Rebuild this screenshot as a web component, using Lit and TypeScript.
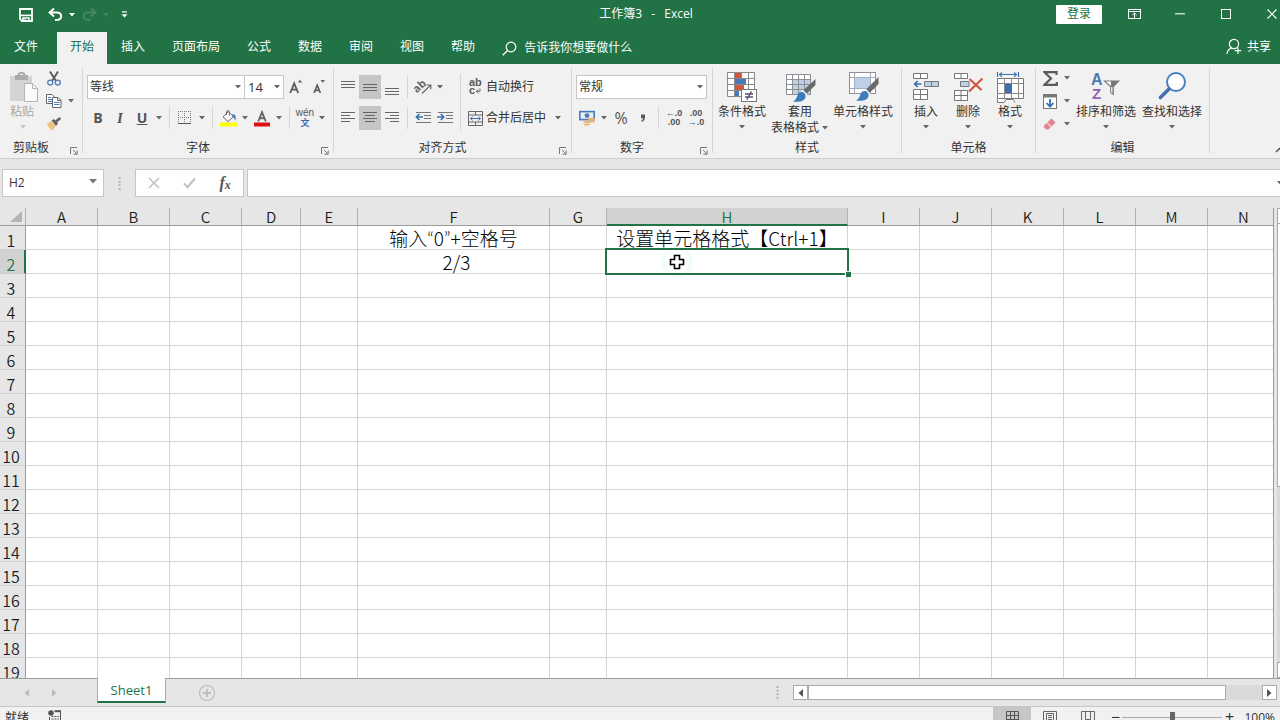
import { LitElement, html, css, svg, nothing, TemplateResult } from "lit";
import { customElement } from "lit/decorators.js";
import { classMap } from "lit/directives/class-map.js";

const icon = (w: number, h: number, body: unknown) =>
  html`<svg width=${w} height=${h} viewBox="0 0 ${w} ${h}" fill="none" aria-hidden="true">${body}</svg>`;

const arrow = (color = "#666") => icon(6, 4, svg`<path d="M0 0H6L3 3.4Z" fill=${color} />`);
const lines = (spec: [number, number, number][], h = 18) =>
  icon(14, h, spec.map(([x, y, w]) => svg`<path d="M${x} ${y + 0.5}h${w}" stroke="#666"/>`));

const icons = {
  save: icon(14, 14, svg`<path d="M1 1H13V13H3L1 11Z" stroke="#fff" stroke-width="1.8"/><path d="M2 7.4H12" stroke="#fff" stroke-width="1.6"/><path d="M4 13V10H10V13" stroke="#fff" stroke-width="1.6"/><path d="M6 10.5V13" stroke="#fff"/>`),
  undo: icon(15, 14, svg`<path d="M1.5 4.5H8.5C12 4.5 13.2 6.2 13.2 8.2C13.2 10.5 11.4 12 8 12H7" stroke="#fff" stroke-width="2"/><path d="M6 .6L1.6 4.6L6 8.6" stroke="#fff" stroke-width="2"/>`),
  redo: icon(15, 14, svg`<g stroke="#45885f" stroke-width="2"><path d="M13.5 4.5H6.5C3 4.5 1.8 6.2 1.8 8.2C1.8 10.5 3.6 12 7 12H8"/><path d="M9 .6L13.4 4.6L9 8.6"/></g>`),
  customize: icon(7, 8, svg`<path d="M1 .9H6" stroke="#fff" stroke-width="1.2"/><path d="M.5 3.2H6.5L3.5 6.6Z" fill="#fff"/>`),
  ribbonMode: icon(13, 10, svg`<rect x=".5" y=".5" width="12" height="9" stroke="#fff"/><path d="M.5 2.5H12.5M6.5 4V9M4.4 6L6.5 4L8.6 6" stroke="#fff"/>`),
  minimize: icon(10, 2, svg`<path d="M0 .8H10" stroke="#fff" stroke-width="1.1"/>`),
  maximize: icon(10, 10, svg`<rect x=".5" y=".5" width="9" height="9" stroke="#fff"/>`),
  close: icon(10, 10, svg`<path d="M.5 .5L9.5 9.5M9.5 .5L.5 9.5" stroke="#fff" stroke-width="1.1"/>`),
  search: icon(15, 15, svg`<circle cx="9" cy="6" r="4.8" stroke="#fff" stroke-width="1.2"/><path d="M5.5 9.5L.8 14.2" stroke="#fff" stroke-width="1.3"/>`),
  share: icon(16, 17, svg`<circle cx="8" cy="6" r="4.6" stroke="#fff" stroke-width="1.2"/><path d="M1 16C1.2 12.8 3 11 5.6 10" stroke="#fff" stroke-width="1.2"/><path d="M12 9.5V16M8.8 12.7H15.2" stroke="#fff" stroke-width="1.2"/>`),
  paste: icon(30, 32, svg`<rect x="0" y="5" width="22" height="25" fill="#d4d4d4"/><rect x="5" y="4" width="13" height="5" fill="#ababab"/><path d="M8.5 5C8.5 .8 14.5 .8 14.5 5" stroke="#ababab" stroke-width="2"/><path d="M14.5 12.5H22.5L27.5 17.5V30.5H14.5Z" fill="#fafafa" stroke="#b4b4b4"/><path d="M22.5 12.5V17.5H27.5" stroke="#b4b4b4"/>`),
  cut: icon(14, 15, svg`<path d="M3 .5L9 10M11 .5L5 10" stroke="#5a5a5a" stroke-width="1.9"/><circle cx="3.2" cy="11.6" r="2.5" stroke="#4a7ab5" stroke-width="1.3"/><circle cx="10.8" cy="11.6" r="2.5" stroke="#4a7ab5" stroke-width="1.3"/>`),
  copy: icon(16, 14, svg`<path d="M.5 .5H6L8.5 3V9.5H.5Z" fill="#fff" stroke="#666"/><path d="M2 3.5H5M2 5.5H6M2 7.5H6" stroke="#4a7ab5"/><path d="M6.5 3.5H12L15 6.5V13.5H6.5Z" fill="#fff" stroke="#666"/><path d="M11.5 3.5V6.5H15" stroke="#666"/><path d="M8 8.5H13.5M8 10.5H13.5" stroke="#4a7ab5"/>`),
  brush: icon(16, 14, svg`<path d="M1 7L5 4L9.5 9L6.5 13.5C4 12 2 9.5 1 7Z" fill="#edc27c"/><path d="M5.5 3.6L8 2L12 6.6L10 9Z" fill="#5f5f5f"/><path d="M10 4.5L14.3 1" stroke="#5f5f5f" stroke-width="2.6"/>`),
  growFont: icon(14, 16, svg`<path d="M1.2 14L5.2 4.4L9.2 14M2.6 10.7H7.8" stroke="#5a5a5a" stroke-width="1.8"/><path d="M8.6 3.6L11 .8L13.4 3.6Z" fill="#5a6a85"/>`),
  shrinkFont: icon(14, 16, svg`<path d="M2 14L5.2 6.2L8.4 14M3.2 11.4H7.2" stroke="#5a5a5a" stroke-width="1.6"/><path d="M8.4 1H13.2L10.8 3.8Z" fill="#5a6a85"/>`),
  borders: icon(14, 14, svg`<g stroke="#777" stroke-dasharray="1 1"><path d="M0 .5H13.5M0 6.5H13.5M.5 0V13.5M6.5 0V13.5M12.5 0V13.5"/></g><path d="M0 12.5H13" stroke="#555"/>`),
  fill: icon(17, 17, svg`<rect y="12.5" width="17" height="4" fill="#ffff00"/><path d="M3 6.8L8.4 1.6L13.4 6.6L8 11.6Z" fill="#fff" stroke="#666"/><path d="M6.5 5V1.8C6.5 .2 9.3 .2 9.3 1.8V5.6" stroke="#666"/><path d="M12 4.4C15.6 4 16.6 7 15.2 11C14.8 8.6 13.8 7.4 12.6 7Z" fill="#4a7ab5"/>`),
  fontColor: icon(17, 17, svg`<rect y="12.5" width="16" height="4" fill="#e01010"/><path d="M4.2 11.5L8 2.2L11.8 11.5M5.4 8.3H10.6" stroke="#666" stroke-width="1.9"/>`),
  top: lines([[0, 3, 14], [0, 6, 14], [0, 9, 14]]),
  middle: lines([[0, 6, 14], [0, 9, 14], [0, 12, 14]]),
  bottom: lines([[0, 10, 14], [0, 13, 14], [0, 16, 14]]),
  left: lines([[0, 3, 14], [0, 6, 9], [0, 9, 14], [0, 12, 9]]),
  center: lines([[0, 3, 14], [2, 6, 10], [0, 9, 14], [2, 12, 10]]),
  right: lines([[0, 3, 14], [5, 6, 9], [0, 9, 14], [5, 12, 9]]),
  orientation: html`<svg width="18" height="18" viewBox="0 0 18 18" fill="none" aria-hidden="true"><text x="1" y="13" font-size="11" font-weight="700" fill="#666" font-family="Open Sans, sans-serif" transform="rotate(-42 5 12)">ab</text><path d="M8 15.5L16.4 7.4M12.4 7H16.8V11.2" stroke="#666" stroke-width="1.2"/></svg>`,
  outdent: icon(17, 14, svg`<path d="M1 1.5H16M9 4.5H16M9 7.5H16M1 11.5H16" stroke="#777"/><path d="M8 6H1.6M4.4 3L1.4 6L4.4 9" stroke="#3b6fb0" stroke-width="1.7"/>`),
  indent: icon(17, 14, svg`<path d="M1 1.5H16M9 4.5H16M9 7.5H16M1 11.5H16" stroke="#777"/><path d="M0 6H6.4M3.8 3L6.8 6L3.8 9" stroke="#3b6fb0" stroke-width="1.7"/>`),
  wrap: html`<svg width="15" height="18" viewBox="0 0 15 18" fill="none" aria-hidden="true"><text x="1" y="8" font-size="11" font-weight="700" fill="#5a5a5a" font-family="Liberation Sans, sans-serif">ab</text><text x="1" y="16" font-size="11" font-weight="700" fill="#5a5a5a" font-family="Liberation Sans, sans-serif">c</text><path d="M12 10.5V13.3H8.5M10.4 11.4L8.4 13.3L10.4 15.2" stroke="#666"/></svg>`,
  merge: icon(15, 15, svg`<path d="M.5 .5H14.5V14.5H.5ZM.5 4H14.5M.5 11H14.5M7.5 .5V4M7.5 11V14.5" stroke="#666"/><path d="M2.5 7.5H12.5M4.6 5.6L2.6 7.5L4.6 9.4M10.4 5.6L12.4 7.5L10.4 9.4" stroke="#3b6fb0"/>`),
  currency: icon(17, 16, svg`<rect x=".8" y="1.6" width="14.4" height="8" fill="#e8eef6" stroke="#4a7ab5" stroke-width="1.6"/><circle cx="8" cy="5.6" r="2.4" fill="#4a7ab5"/><g fill="#e9b56b"><ellipse cx="12.5" cy="9" rx="3.6" ry="1.2"/><ellipse cx="12.5" cy="11.6" rx="3.6" ry="1.1"/><ellipse cx="7.5" cy="12" rx="3.2" ry="1.1"/><ellipse cx="8" cy="14.5" rx="3.2" ry="1.1"/></g>`),
  comma: icon(6, 10, svg`<path d="M1 1.4H5V4.4C5 6.6 3.8 8 1.6 8.8L1.2 7.8C2.4 7.2 3 6.4 3 5.2H1Z" fill="#5a5a5a"/>`),
  conditional: icon(31, 31, svg`<rect x=".5" y=".5" width="27" height="24" fill="#fff"/><rect x="8" y="1" width="6" height="5" fill="#d0583c"/><rect x="8" y="7" width="11" height="5" fill="#4a7ab5"/><rect x="8" y="13" width="9" height="5" fill="#d0583c"/><rect x="8" y="19" width="4" height="5" fill="#4a7ab5"/><path d="M.5 .5H27.5V24.5H.5ZM.5 6.5H27.5M.5 12.5H27.5M.5 18.5H27.5M7.5 .5V24.5M14.5 .5V6M21.5 .5V24.5" stroke="#8a8a8a"/><rect x="14.5" y="17.5" width="15" height="12" fill="#fff" stroke="#777"/><path d="M18 22H26M18 25H26M24.4 19.4L19.8 27.6" stroke="#554f73" stroke-width="1.3"/>`),
  tableStyle: icon(31, 31, svg`<rect x="1.5" y="2.5" width="24" height="20" fill="#fff"/><rect x="7" y="8" width="19" height="15" fill="#bdd0e6"/><path d="M1.5 2.5H25.5V22.5H1.5ZM1.5 7.5H25.5M1.5 12.5H25.5M1.5 17.5H25.5M7.5 2.5V22.5M13.5 2.5V22.5M19.5 2.5V22.5" stroke="#8c8f94"/><path d="M30.5 7V13L21 22.5L17.5 19Z" fill="#6a6a6a"/><path d="M17 18.5L21.6 23" stroke="#fff" stroke-width="2"/><path d="M16.5 20C19 20 21 22 20.5 25C19.5 29.5 14 30.5 8 29.5C11 28 11.5 26 12.5 23C13.2 21 14.6 20 16.5 20Z" fill="#3e7dbd"/>`),
  cellStyle: icon(31, 31, svg`<rect x="1.5" y=".5" width="26" height="21" fill="#fff" stroke="#8c8f94"/><path d="M1.5 5.5H27.5M1.5 16.5H27.5M6.5 .5V21.5M22.5 .5V21.5" stroke="#a5a8ad"/><rect x="6.5" y="5.5" width="16" height="11" fill="#bdd0e6" stroke="#9cb0c6"/><path d="M30.5 5V12L21 21.5L17.5 18Z" fill="#6a6a6a"/><path d="M17 17.5L21.6 22" stroke="#fff" stroke-width="2"/><path d="M16.5 19C19 19 21 21 20.5 24C19.5 28.5 14 29.5 8 28.5C11 27 11.5 25 12.5 22C13.2 20 14.6 19 16.5 19Z" fill="#3e7dbd"/>`),
  insertCells: icon(28, 30, svg`<g fill="#fff" stroke="#777"><path d="M1.5 1.5H15.5V6.5H1.5ZM8.5 1.5V6.5M1.5 17.5H15.5V27.5H1.5ZM8.5 17.5V27.5M1.5 22.5H15.5"/></g><path d="M12.5 9.5H26.5V14.5H12.5ZM19.5 9.5V14.5" fill="#bdd0e6" stroke="#777"/><path d="M9.5 12H2.4M5.6 9L2.6 12L5.6 15" stroke="#3b6fb0" stroke-width="1.7"/>`),
  deleteCells: icon(30, 30, svg`<g fill="#fff" stroke="#777"><path d="M1.5 1.5H14.5V6.5H1.5ZM8 1.5V6.5M1.5 18.5H14.5V28.5H1.5ZM8 18.5V28.5M1.5 23.5H14.5"/></g><path d="M7.5 9.5H16V14.5H7.5Z" fill="#bdd0e6" stroke="#777"/><path d="M16.5 7L28.5 18M29.5 6.5L16 19.5" stroke="#d0583c" stroke-width="2.2"/>`),
  formatCells: icon(29, 31, svg`<path d="M1.5 0V5M22.5 0V5M3 2.5H21M6 .5L3.4 2.5L6 4.8M18 .5L20.6 2.5L18 4.8" stroke="#3b6fb0" stroke-width="1.1"/><path d="M1.5 6.5H27.5V26.5H1.5Z" fill="#fff" stroke="#777"/><path d="M1.5 11.5H27.5M1.5 21.5H27.5M8.5 6.5V26.5M15.5 6.5V26.5M22.5 6.5V26.5" stroke="#8a8a8a"/><rect x="9" y="12" width="7" height="9" fill="#3e6fae"/><path d="M1.5 26.5V30.5H8L10 27.5H17L19 30.5" fill="#fff" stroke="#777"/>`),
  sum: icon(15, 15, svg`<path d="M13.5 4V1.2H1.6L8 7.5L1.6 13.8H13.8V11" stroke="#5a5a5a" stroke-width="2.2"/>`),
  fillDown: icon(14, 15, svg`<rect x=".5" y=".5" width="13" height="14" fill="#fff" stroke="#777"/><rect x=".5" y=".5" width="13" height="3" fill="#777"/><path d="M7 5V12.4M3.6 9L7 12.6L10.4 9" stroke="#3b6fb0" stroke-width="1.8"/>`),
  eraser: icon(14, 14, svg`<path d="M1 8.6L8.4 1.6L12.6 5.4L5.4 12.6H3.4L1 10.6Z" fill="#e28494"/><path d="M4 5.8L8.4 9.8" stroke="#f7d5da" stroke-width="1.2"/>`),
  sort: html`<svg width="30" height="30" viewBox="0 0 30 30" fill="none" aria-hidden="true"><text x="0" y="13" font-size="16" font-weight="700" fill="#4a7ab5" font-family="Liberation Sans, sans-serif">A</text><text x="1" y="27" font-size="15" font-weight="700" fill="#9560b4" font-family="Liberation Sans, sans-serif">Z</text><path d="M12 8.5H29L22.8 15V23.5L19.2 21V15Z" fill="#777"/><path d="M14.8 9.6H20V14Z" fill="#fff"/><path d="M20.2 15V20.4L21.4 21.4V15Z" fill="#fff"/></svg>`,
  find: icon(30, 30, svg`<circle cx="19" cy="10" r="9" fill="#fff" stroke="#4a82c0" stroke-width="2"/><path d="M12 17L3.4 25.6" stroke="#4472a8" stroke-width="3.6" stroke-linecap="round"/>`),
  launcher: icon(8, 8, svg`<path d="M.5 7V.5H7" stroke="#777"/><path d="M3 3L7 7M7.2 3.4V7.2H3.4" stroke="#777"/>`),
  cancel: icon(12, 12, svg`<path d="M1 1L11 11M11 1L1 11" stroke="#c4c4c4" stroke-width="1.7"/>`),
  confirm: icon(13, 12, svg`<path d="M1 6.5L4.6 10L12 1.5" stroke="#c4c4c4" stroke-width="2.3"/>`),
  dots: icon(3, 13, svg`<path d="M.5 1H2.5M.5 4.7H2.5M.5 8.3H2.5M.5 12H2.5" stroke="#a6a6a6" stroke-width="1.4"/>`),
  corner: icon(12, 11, svg`<path d="M12 0V11H0Z" fill="#b4b4b4"/>`),
  navLeft: icon(5, 8, svg`<path d="M5 0V8L.5 4Z" fill="#bdbdbd"/>`),
  navRight: icon(5, 8, svg`<path d="M0 0V8L4.5 4Z" fill="#bdbdbd"/>`),
  scrollLeft: icon(5, 8, svg`<path d="M5 0V8L.5 4Z" fill="#555"/>`),
  scrollRight: icon(5, 8, svg`<path d="M0 0V8L4.5 4Z" fill="#555"/>`),
  addSheet: icon(18, 18, svg`<circle cx="9" cy="9" r="7.5" stroke="#bdbdbd" stroke-width="1.2"/><path d="M9 5V13M5 9H13" stroke="#bdbdbd" stroke-width="1.8"/>`),
  record: icon(14, 12, svg`<circle cx="3" cy="3" r="2.8" fill="#555"/><path d="M6.5 1.2H13" stroke="#555" stroke-width="2"/><path d="M12.5 1V11.5H1.5V7" stroke="#555"/><path d="M3.5 6.5H11M3.5 9H11" stroke="#555" stroke-dasharray="2 1"/>`),
  normalView: icon(13, 13, svg`<path d="M.5 .5H12.5V12.5H.5ZM.5 4.5H12.5M.5 8.5H12.5M4.5 .5V12.5M8.5 .5V12.5" stroke="#555"/>`),
  pageView: icon(14, 13, svg`<path d="M.5 .5H13.5V12.5H.5ZM3.5 2.5H10.5V12.5H3.5Z" stroke="#666"/><path d="M5 4.5H9M5 6.5H9M5 8.5H9M5 10.5H9" stroke="#666"/>`),
  breakView: icon(14, 13, svg`<path d="M.5 12.5V.5H13.5V12.5M4.5 .5V8.5H9.5V.5M.5 12.5H13.5" stroke="#666"/>`),
  collapse: icon(8, 6, svg`<path d="M1 5L4.5 1.5L8 5" stroke="#555" stroke-width="1.5"/>`),
  cursor: icon(16, 16, svg`<path d="M5.5 1.5H10.5V5.5H14.5V10.5H10.5V14.5H5.5V10.5H1.5V5.5H5.5Z" fill="#fff" stroke="#000" stroke-width="1.6"/>`),
};

interface Column { name: string; width: number; }

const columns: Column[] = [
  { name: "A", width: 72 }, { name: "B", width: 72 }, { name: "C", width: 72 },
  { name: "D", width: 59 }, { name: "E", width: 57 }, { name: "F", width: 192 },
  { name: "G", width: 57 }, { name: "H", width: 241 }, { name: "I", width: 72 },
  { name: "J", width: 72 }, { name: "K", width: 72 }, { name: "L", width: 72 },
  { name: "M", width: 72 }, { name: "N", width: 72 },
];

const cells: Record<string, TemplateResult> = {
  F1: html`输入<span class="quote">“</span>0<span class="quote">”</span>+空格号`,
  H1: html`设置单元格格式【Ctrl+1】`,
  F2: html`<span class="fraction">2/3</span>`,
};

@customElement("sheet-grid")
class SheetGrid extends LitElement {
  static styles = css`
    :host { display: block; flex: 1; min-width: 0; overflow: hidden; background: #fff; border-right: 1px solid #9b9b9b; }
    table { table-layout: fixed; width: 100%; min-width: 1280px; border-collapse: separate; border-spacing: 0; font-family: "Noto Sans CJK SC", sans-serif; color: #1c1c1c; }
    th, td { box-sizing: border-box; padding: 0; border-right: 1px solid #d4d4d4; border-bottom: 1px solid #d4d4d4; text-align: center; white-space: nowrap; }
    td { height: 24px; font-size: 19px; line-height: 23px; font-weight: 300; color: #000; }
    thead th { height: 18px; font-size: 15px; line-height: 17px; font-weight: 350; background: #e6e6e6; border-right-color: #b1b1b1; border-bottom-color: #9b9b9b; }
    tbody th { height: 24px; padding-top: 5px; padding-right: 3px; font-size: 16px; line-height: 18px; font-weight: 350; background: #e6e6e6; border-right-color: #9b9b9b; border-bottom-color: #cfcfcf; }
    .all { line-height: 0; text-align: right; vertical-align: bottom; padding: 0 3px 3px 0; }
    .all svg { display: inline-block; }
    thead .active { background: #d2d2d2; color: #217346; border-bottom: 2px solid #217346; line-height: 16px; padding-top: 1px; line-height: 15px; }
    tbody th.active { background: #d2d2d2; color: #217346; border-right: 2px solid #217346; padding-right: 2px; }
    .head { width: 26px; }
    .quote { font-family: Lato, sans-serif; line-height: 0; }
    .fraction { padding-left: 6px; }
    .selected { position: relative; }
    .selection { position: absolute; inset: -2px; border: 2px solid #217346; }
    .handle { position: absolute; right: -4px; bottom: -4px; width: 5px; height: 5px; background: #217346; border: 1px solid #fff; border-width: 1px 0 0 1px; }
    .pointer { position: absolute; left: 54px; top: -4px; width: 32px; height: 32px; display: grid; place-items: center; border-radius: 50%; background: radial-gradient(circle, #fff 40%, #f0fbfc 65%, #fff 72%); }
  `;

  render() {
    const rows = Array.from({ length: 19 }, (_, i) => i + 1);
    return html`<table>
      <colgroup>
        <col class="head" />
        ${columns.map((c) => html`<col style="width:${c.width}px" />`)}
      </colgroup>
      <thead>
        <tr>
          <th class="all">${icons.corner}</th>
          ${columns.map((c) => html`<th scope="col" class=${classMap({ active: c.name === "H" })}>${c.name}</th>`)}
        </tr>
      </thead>
      <tbody>
        ${rows.map((r) => html`<tr>
          <th scope="row" class=${classMap({ active: r === 2 })}>${r}</th>
          ${columns.map((c) => c.name === "H" && r === 2
            ? html`<td class="selected"><div class="pointer">${icons.cursor}</div><div class="selection"><div class="handle"></div></div></td>`
            : html`<td>${cells[c.name + r] ?? nothing}</td>`)}
        </tr>`)}
      </tbody>
    </table>`;
  }
}

@customElement("app-root")
class AppRoot extends LitElement {
  static styles = css`
    :host { display: flex; flex-direction: column; height: 100vh; overflow: hidden; background: #e6e6e6; color: #333; font: 12px/16px "Open Sans", "Noto Sans CJK SC", sans-serif; }
    svg { display: block; flex: none; }
    button, input, select { font: inherit; color: inherit; background: none; border: 0; padding: 0; margin: 0; outline: 0; border-radius: 0; }
    button { display: flex; align-items: center; justify-content: center; white-space: nowrap; flex: none; }
    select { appearance: none; }

    .title-bar { display: grid; grid-template-columns: 1fr auto 1fr; align-items: center; height: 32px; flex: none; padding-bottom: 4px; box-sizing: border-box; background: #217346; color: #fff; }
    .quick { display: flex; align-items: center; padding: 2px 0 0 15px; }
    .quick button { width: 22px; height: 24px; }
    .quick .drop { width: 12px; }
    .quick .undo { margin-left: 7px; }
    .quick .last { margin-left: 1px; }
    .title { white-space: pre; padding-left: 12px; }
    .title span { padding: 0 3px; }
    .window { display: flex; justify-content: flex-end; align-items: center; }
    .window button { width: 46px; height: 28px; }
    .window .sign-in { height: 19px; background: #fff; color: #217346; margin-right: 9px; border-radius: 1px; }
    .window .close { width: 31px; justify-content: flex-end; padding-right: 3px; }

    .tabs { display: flex; align-items: stretch; gap: 1px; height: 32px; flex: none; background: #217346; color: #fff; }
    .tabs button { padding: 0 13px 2px; }
    .tabs .file { width: 56px; justify-content: flex-start; padding-left: 14px; }
    .tabs .current { background: #f1f1f1; color: #217346; }
    .tell { display: flex; align-items: center; gap: 7px; margin-left: 13px; }
    .tell input { width: 160px; }
    .tell input::placeholder { color: #fff; opacity: 1; }
    .tabs .share { margin-left: auto; gap: 5px; padding: 0 9px 3px; }

    .ribbon { display: flex; height: 94px; flex: none; background: #f1f1f1; border-bottom: 1px solid #cdcdcd; position: relative; overflow: hidden; }
    .group { display: flex; flex-direction: column; position: relative; flex: none; padding-right: 1px; }
    .group::after { content: ""; position: absolute; right: 0; top: 4px; bottom: 5px; width: 1px; background: #d5d5d5; }
    .clipboard { width: 82px; }
    .font { width: 250px; }
    .alignment { width: 237px; }
    .numbers { width: 140px; }
    .styles { width: 188px; }
    .cells { width: 133px; }
    .editing { width: 173px; }
    .cells .content, .editing .content { padding-left: 3px; }
    .content { display: flex; height: 76px; box-sizing: border-box; padding-top: 4px; }
    .caption { display: flex; align-items: center; height: 16px; color: #333; }
    .caption span { flex: 1; text-align: center; }
    .caption button { width: 20px; height: 16px; padding: 5px 0 0 4px; box-sizing: border-box; }
    .rows { display: flex; flex-direction: column; gap: 7px; padding-top: 7px; }
    .row { display: flex; align-items: center; height: 24px; }
    .tool { width: 22px; height: 24px; }
    .drop { width: 12px; height: 24px; }
    .on { background: #c6c6c6; }
    .sep { width: 9px; height: 22px; flex: none; background: linear-gradient(#d5d5d5, #d5d5d5) center / 1px 100% no-repeat; }
    .tall { height: 57px; margin-top: 6px; }
    .letter { font-size: 14px; font-weight: 700; color: #555; }
    .italic { font-family: "Liberation Serif", serif; font-style: italic; font-size: 15px; }
    .underline { text-decoration: underline; }
    .pinyin { flex-direction: column; font: 10px/10px "Liberation Sans", "Noto Sans CJK SC", sans-serif; color: #555; }
    .pinyin b { font-size: 9px; line-height: 10px; color: #3b6fb0; }
    .combo { display: flex; position: relative; height: 24px; }
    .combo select { width: 100%; box-sizing: border-box; height: 24px; padding: 0 14px 0 2px; background: #fff; border: 1px solid #c6c6c6; }
    .combo svg { position: absolute; right: 4px; top: 10px; pointer-events: none; }
    .font-name { width: 158px; }
    .font-size { width: 40px; margin-left: -1px; font-size: 13px; }
    .font-size select { padding-left: 3px; }
    .font-tools { padding-left: 4px; }
    .size-tool { margin-left: 1px; }
    .align { width: 122px; padding-left: 3px; box-sizing: border-box; }
    .number { width: 131px; padding-left: 4px; }
    .wide { gap: 3px; padding-left: 3px; color: #333; }
    .merge-drop { display: flex; padding-left: 6px; }
    .percent { font-size: 16px; color: #555; }
    .decimal { flex-direction: column; font: 700 9px/9px "Liberation Sans", sans-serif; color: #555; }
    .decimal i { font-style: normal; color: #3b6fb0; }

    .big { flex-direction: column; justify-content: flex-start; height: 71px; padding-top: 3px; line-height: 16px; color: #333; }
    .big .art { display: grid; place-items: center; height: 32px; }
    .big .art + span { padding-top: 1px; }
    .big .drop { display: grid; place-items: center; height: 14px; }
    .two { display: flex; align-items: center; padding-left: 2px; }
    .big .two .drop { height: 16px; }
    .w42 { width: 42px; }
    .w58 { width: 58px; }
    .w64 { width: 64px; }
    .w66 { width: 66px; }
    .cell-style { margin-left: 2px; }
    .paste { width: 43px; box-sizing: border-box; padding-left: 10px; align-items: flex-start; color: #a8a8a8; }
    .paste .drop { width: 26px; }
    .small { display: flex; flex-direction: column; justify-content: space-between; height: 66px; }
    .small .row { height: 20px; }
    .collapse { position: absolute; right: -3px; bottom: 5px; }

    .formula-bar { display: flex; align-items: stretch; height: 49px; flex: none; box-sizing: border-box; padding: 10px 0 11px 2px; }
    .box { display: flex; align-items: center; background: #fff; border: 1px solid #c6c6c6; box-sizing: border-box; }
    .name-box { width: 102px; }
    .name-box input { flex: 1; min-width: 0; padding-left: 6px; }
    .name-box button { width: 20px; height: 24px; padding-bottom: 3px; box-sizing: border-box; }
    .grip { width: 31px; display: grid; place-items: center; flex: none; }
    .fx { width: 109px; margin-right: 3px; }
    .fx button { flex: 1; height: 26px; }
    .fx .fn { font: italic 700 16px/20px "Liberation Serif", serif; color: #555; }
    .fx small { font-size: 12px; padding-top: 3px; }
    .formula { flex: 1; border-right: 0; }
    .formula input { flex: 1; min-width: 0; padding-left: 6px; height: 24px; }
    .formula button { width: 3px; overflow: hidden; justify-content: flex-start; }

    .work { display: flex; flex: 1; min-height: 0; border-bottom: 1px solid #9b9b9b; box-sizing: border-box; }
    .vertical { width: 6px; box-sizing: border-box; padding-left: 3px; display: flex; flex-direction: column; flex: none; }
    .vertical i { border: 1px solid #ababab; border-right: 0; background: #fff; box-sizing: border-box; height: 16px; }
    .vertical .thumb { height: 263px; border-top: 0; }
    .vertical .track { flex: 1; background: #d9d9d9; border: 0; }

    .sheet-bar { display: flex; align-items: center; height: 27px; flex: none; }
    .nav { width: 28px; height: 24px; }
    .navs { display: flex; width: 97px; box-sizing: border-box; padding-left: 12px; flex: none; }
    .sheet-tab { width: 69px; height: 25px; margin-top: -1px; align-self: flex-start; box-sizing: border-box; background: #fff; color: #217346; border: 1px solid #ababab; border-top: 0; border-bottom: 2px solid #217346; font-size: 13px; }
    .add { margin-left: 32px; }
    .bar-grip { margin: 0 14px 0 auto; }
    .scroll { display: flex; width: 484px; height: 15px; margin-right: 3px; flex: none; background: #dadada; }
    .scroll button { width: 15px; box-sizing: border-box; border: 1px solid #ababab; background: #fff; }
    .scroll .thumb { width: 418px; background: #fff; border: 1px solid #ababab; box-sizing: border-box; }
    .scroll .end { margin-left: auto; }

    .status { display: flex; height: 14px; flex: none; box-sizing: border-box; overflow: hidden; background: #f1f1f1; border-top: 1px solid #c6c6c6; align-items: flex-start; }
    .status > * { height: 20px; }
    .status span { line-height: 21px; padding-left: 5px; }
    .status .macro { margin-left: 19px; height: 18px; }
    .views { display: flex; margin-left: auto; padding-right: 1px; }
    .views button { width: 38px; height: 20px; }
    .zoom { display: flex; align-items: center; }
    .zoom button { width: 14px; font-size: 16px; }
    .zoom input { appearance: none; width: 100px; height: 12px; background: linear-gradient(#aaa, #aaa) center / 100% 1px no-repeat; }
    .zoom input::-webkit-slider-thumb { appearance: none; width: 5px; height: 11px; background: #666; }
    .status .percent-label { padding: 0 5px 0 8px; }
  `;

  private tool(label: string, content: unknown, cls = "") {
    return html`<button class="tool ${cls}" aria-label=${label}>${content}</button>`;
  }

  private drop(label: string) {
    return html`<button class="drop" aria-label="${label}选项">${arrow()}</button>`;
  }

  private group(name: string, cls: string, content: TemplateResult, launcher = false) {
    return html`<section class="group ${cls}" aria-label=${name}>
      <div class="content">${content}</div>
      <div class="caption"><span>${name}</span>${launcher
        ? html`<button aria-label="${name}设置">${icons.launcher}</button>` : nothing}</div>
    </section>`;
  }

  private big(label: string, art: TemplateResult, cls: string, color = "#666") {
    return html`<button class="big ${cls}"><div class="art">${art}</div><span>${label}</span><div class="drop">${arrow(color)}</div></button>`;
  }

  private combo(label: string, value: string, cls = "") {
    return html`<label class="combo ${cls}"><select aria-label=${label}><option>${value}</option></select>${arrow()}</label>`;
  }

  private renderRibbon() {
    return html`<div class="ribbon">
      ${this.group("剪贴板", "clipboard", html`
        ${this.big("粘贴", icons.paste, "paste", "#c4c4c4")}
        <div class="small">
          <div class="row">${this.tool("剪切", icons.cut)}</div>
          <div class="row">${this.tool("复制", icons.copy)}${this.drop("复制")}</div>
          <div class="row">${this.tool("格式刷", icons.brush)}</div>
        </div>`, true)}
      ${this.group("字体", "font", html`<div class="rows font-tools">
        <div class="row">${this.combo("字体", "等线", "font-name")}${this.combo("字号", "14", "font-size")}
          ${this.tool("增大字号", icons.growFont, "size-tool")}${this.tool("减小字号", icons.shrinkFont, "size-tool")}</div>
        <div class="row">
          <button class="tool letter" aria-label="加粗">B</button>
          <button class="tool letter italic" aria-label="倾斜">I</button>
          <button class="tool letter underline" aria-label="下划线">U</button>${this.drop("下划线")}
          <i class="sep"></i>${this.tool("边框", icons.borders)}${this.drop("边框")}
          <i class="sep"></i>${this.tool("填充颜色", icons.fill)}${this.drop("填充颜色")}
          ${this.tool("字体颜色", icons.fontColor)}${this.drop("字体颜色")}
          <i class="sep"></i><button class="tool pinyin" aria-label="拼音">wén<b>文</b></button>${this.drop("拼音")}
        </div></div>`, true)}
      ${this.group("对齐方式", "alignment", html`
        <div class="rows align">
          <div class="row">${this.tool("顶端对齐", icons.top)}${this.tool("垂直居中", icons.middle, "on")}${this.tool("底端对齐", icons.bottom)}
            <i class="sep"></i>${this.tool("方向", icons.orientation)}${this.drop("方向")}</div>
          <div class="row">${this.tool("左对齐", icons.left)}${this.tool("居中", icons.center, "on")}${this.tool("右对齐", icons.right)}
            <i class="sep"></i>${this.tool("减少缩进量", icons.outdent)}${this.tool("增加缩进量", icons.indent)}</div>
        </div>
        <i class="sep tall"></i>
        <div class="rows">
          <div class="row"><button class="wide">${icons.wrap}自动换行</button></div>
          <div class="row"><button class="wide">${icons.merge}合并后居中</button><div class="merge-drop">${this.drop("合并后居中")}</div></div>
        </div>`, true)}
      ${this.group("数字", "numbers", html`<div class="rows number">
        ${this.combo("数字格式", "常规")}
        <div class="row">${this.tool("会计数字格式", icons.currency)}${this.drop("会计数字格式")}
          <button class="tool percent" aria-label="百分比样式">%</button>
          ${this.tool("千位分隔样式", icons.comma)}<i class="sep"></i>
          <button class="tool decimal" aria-label="增加小数位数"><span><i>←</i>.0</span><span>.00</span></button>
          <button class="tool decimal" aria-label="减少小数位数"><span>.00</span><span><i>→</i>.0</span></button>
        </div></div>`, true)}
      ${this.group("样式", "styles", html`
        ${this.big("条件格式", icons.conditional, "w58")}
        <button class="big w58"><div class="art">${icons.tableStyle}</div><span>套用</span><div class="two">表格格式<div class="drop">${arrow()}</div></div></button>
        ${this.big("单元格样式", icons.cellStyle, "w64 cell-style")}`)}
      ${this.group("单元格", "cells", html`
        ${this.big("插入", icons.insertCells, "w42")}${this.big("删除", icons.deleteCells, "w42")}${this.big("格式", icons.formatCells, "w42")}`)}
      ${this.group("编辑", "editing", html`
        <div class="small">
          <div class="row">${this.tool("自动求和", icons.sum)}${this.drop("自动求和")}</div>
          <div class="row">${this.tool("填充", icons.fillDown)}${this.drop("填充")}</div>
          <div class="row">${this.tool("清除", icons.eraser)}${this.drop("清除")}</div>
        </div>
        ${this.big("排序和筛选", icons.sort, "w66")}${this.big("查找和选择", icons.find, "w66")}`)}
      <button class="collapse" aria-label="折叠功能区">${icons.collapse}</button>
    </div>`;
  }

  render() {
    const tabs = ["插入", "页面布局", "公式", "数据", "审阅", "视图", "帮助"];
    return html`
      <header class="title-bar">
        <div class="quick">
          <button aria-label="保存">${icons.save}</button>
          <button class="undo" aria-label="撤消">${icons.undo}</button><button class="drop" aria-label="撤消列表">${arrow("#fff")}</button>
          <button aria-label="恢复">${icons.redo}</button><button class="drop" aria-label="恢复列表">${arrow("#45885f")}</button>
          <button class="last" aria-label="自定义快速访问工具栏">${icons.customize}</button>
        </div>
        <div class="title">工作簿3 <span> - </span> Excel</div>
        <div class="window">
          <button class="sign-in">登录</button>
          <button aria-label="功能区显示选项">${icons.ribbonMode}</button>
          <button aria-label="最小化">${icons.minimize}</button>
          <button aria-label="最大化">${icons.maximize}</button>
          <button class="close" aria-label="关闭">${icons.close}</button>
        </div>
      </header>
      <nav class="tabs">
        <button class="file">文件</button><button class="current">开始</button>
        ${tabs.map((t) => html`<button>${t}</button>`)}
        <label class="tell">${icons.search}<input aria-label="告诉我你想要做什么" placeholder="告诉我你想要做什么" /></label>
        <button class="share">${icons.share}共享</button>
      </nav>
      ${this.renderRibbon()}
      <div class="formula-bar">
        <div class="box name-box"><input aria-label="名称框" value="H2" /><button aria-label="名称列表">${icon(8, 5, svg`<path d="M0 0H8L4 4.4Z" fill="#777"/>`)}</button></div>
        <div class="grip">${icons.dots}</div>
        <div class="box fx">
          <button aria-label="取消">${icons.cancel}</button><button aria-label="输入">${icons.confirm}</button>
          <button class="fn" aria-label="插入函数">f<small>x</small></button>
        </div>
        <div class="box formula"><input aria-label="编辑栏" /><button aria-label="展开编辑栏">${arrow()}</button></div>
      </div>
      <main class="work"><sheet-grid></sheet-grid>
        <div class="vertical"><i></i><i class="thumb"></i><i class="track"></i><i></i></div>
      </main>
      <div class="sheet-bar">
        <div class="navs"><button class="nav" aria-label="上一个工作表">${icons.navLeft}</button><button class="nav" aria-label="下一个工作表">${icons.navRight}</button></div>
        <button class="sheet-tab">Sheet1</button>
        <button class="add" aria-label="新工作表">${icons.addSheet}</button>
        <div class="bar-grip">${icons.dots}</div>
        <div class="scroll"><button aria-label="向左滚动">${icons.scrollLeft}</button><div class="thumb"></div><button class="end" aria-label="向右滚动">${icons.scrollRight}</button></div>
      </div>
      <footer class="status">
        <span>就绪</span><button class="macro" aria-label="录制宏">${icons.record}</button>
        <div class="views">
          <button class="on" aria-label="普通">${icons.normalView}</button>
          <button aria-label="页面布局">${icons.pageView}</button>
          <button aria-label="分页预览">${icons.breakView}</button>
        </div>
        <div class="zoom"><button aria-label="缩小">−</button><input type="range" aria-label="显示比例" min="0" max="100" value="50" /><button aria-label="放大">+</button></div>
        <span class="percent-label">100%</span>
      </footer>`;
  }
}
